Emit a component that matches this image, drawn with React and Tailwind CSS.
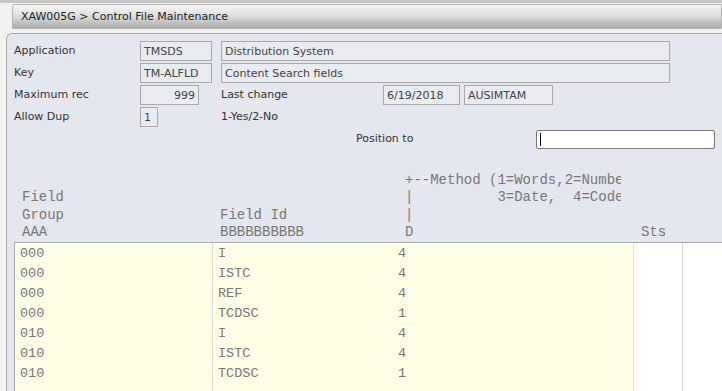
import React from "react";

const rows = [
  ["000", "I", "4"],
  ["000", "ISTC", "4"],
  ["000", "REF", "4"],
  ["000", "TCDSC", "1"],
  ["010", "I", "4"],
  ["010", "ISTC", "4"],
  ["010", "TCDSC", "1"],
];

function Box({ className = "", children }) {
  return (
    <div
      className={
        "h-[20px] border border-[#a9a9a9] bg-[#e8ebf0] px-[3px] text-[11px] leading-[20px] text-[#444] whitespace-nowrap " +
        className
      }
    >
      {children}
    </div>
  );
}

export default function App() {
  return (
    <div
      className="w-[722px] h-[391px] overflow-hidden bg-[#f2f2f2] border-t-[3px] border-[#c6c6c6] flex flex-col"
      style={{ fontFamily: '"DejaVu Sans", Verdana, sans-serif' }}
    >
      {/* Title bar */}
      <div className="ml-[12px] mt-[1px] h-[25px] border border-[#b4b4b4] rounded-tl-[3px] bg-gradient-to-b from-[#f6f6f6] via-[#dcdcdc] to-[#a9a9a9] pl-[8px] pt-[2px] flex items-center text-[11px] text-[#222]">
        XAW005G &gt; Control File Maintenance
      </div>

      {/* Panel */}
      <div className="mt-[4px] ml-[6px] flex-1 flex flex-col border-l border-t border-[#a8a8a8] rounded-tl-[6px] bg-[#e4e7ed] pt-[7px] text-[11px] text-[#333]">
        <div className="flex flex-col gap-[2px] pl-[7px]">
          <div className="flex items-center h-[20px]">
            <div className="w-[126px]">Application</div>
            <Box className="w-[72px]">TMSDS</Box>
            <Box className="ml-[9px] w-[449px]">Distribution System</Box>
          </div>
          <div className="flex items-center h-[20px]">
            <div className="w-[126px]">Key</div>
            <Box className="w-[72px]">TM-ALFLD</Box>
            <Box className="ml-[9px] w-[449px]">Content Search fields</Box>
          </div>
          <div className="flex items-center h-[20px]">
            <div className="w-[126px]">Maximum rec</div>
            <Box className="w-[59px] text-right">999</Box>
            <div className="ml-[22px] w-[162px]">Last change</div>
            <Box className="w-[77px]">6/19/2018</Box>
            <Box className="ml-[4px] w-[89px]">AUSIMTAM</Box>
          </div>
          <div className="flex items-center h-[20px]">
            <div className="w-[126px]">Allow Dup</div>
            <Box className="w-[18px] h-[19px]">1</Box>
            <div className="ml-[63px]">1-Yes/2-No</div>
          </div>
        </div>

        <div className="flex items-center h-[19px] mt-[3px]">
          <div className="ml-[349px] w-[180px]">Position to</div>
          <div className="w-[179px] h-[19px] border border-[#777] rounded-[2px] bg-white flex items-center pl-[3px]">
            <div className="w-[1px] h-[13px] bg-black" />
          </div>
        </div>

        {/* Column headings */}
        <div
          className="mt-[23px] flex text-[14px] leading-[17.4px] text-[#777] whitespace-pre"
          style={{ fontFamily: '"Liberation Mono", "Courier New", monospace' }}
        >
          <div className="ml-[15px] w-[198px] flex flex-col">
            <div> </div>
            <div>Field</div>
            <div>Group</div>
            <div>AAA</div>
          </div>
          <div className="w-[185px] flex flex-col">
            <div> </div>
            <div> </div>
            <div>Field Id</div>
            <div>BBBBBBBBBB</div>
          </div>
          <div className="w-[216px] flex flex-col overflow-hidden">
            <div>+--Method (1=Words,2=Numbe</div>
            <div>|          3=Date,  4=Code</div>
            <div>|</div>
            <div>D</div>
          </div>
          <div className="ml-[20px] flex flex-col">
            <div> </div>
            <div> </div>
            <div> </div>
            <div>Sts</div>
          </div>
        </div>

        {/* Table */}
        <div
          className="ml-[7px] flex-1 flex border-t border-l border-[#a9a9a9] text-[13.5px] text-[#777]"
          style={{ fontFamily: '"Liberation Mono", "Courier New", monospace' }}
        >
          <div className="w-[618px] bg-[#fffee6] flex flex-col">
            {rows.map(([g, f, d], i) => (
              <div key={i} className="flex h-[20px]">
                <div className="w-[198px] h-full flex items-center pl-[5px] pt-[2px] border-r border-[#dcdcd0]">{g}</div>
                <div className="w-[185px] pl-[5px] pt-[2px] flex items-center">{f}</div>
                <div className="pt-[2px] flex items-center">{d}</div>
              </div>
            ))}
            <div className="flex-1 flex">
              <div className="w-[198px] border-r border-[#dcdcd0]" />
            </div>
          </div>
          <div className="w-[49px] bg-white border-l border-[#e0e0e0]" />
          <div className="flex-1 bg-white border-l border-[#dcdcdc]" />
        </div>
      </div>
    </div>
  );
}
